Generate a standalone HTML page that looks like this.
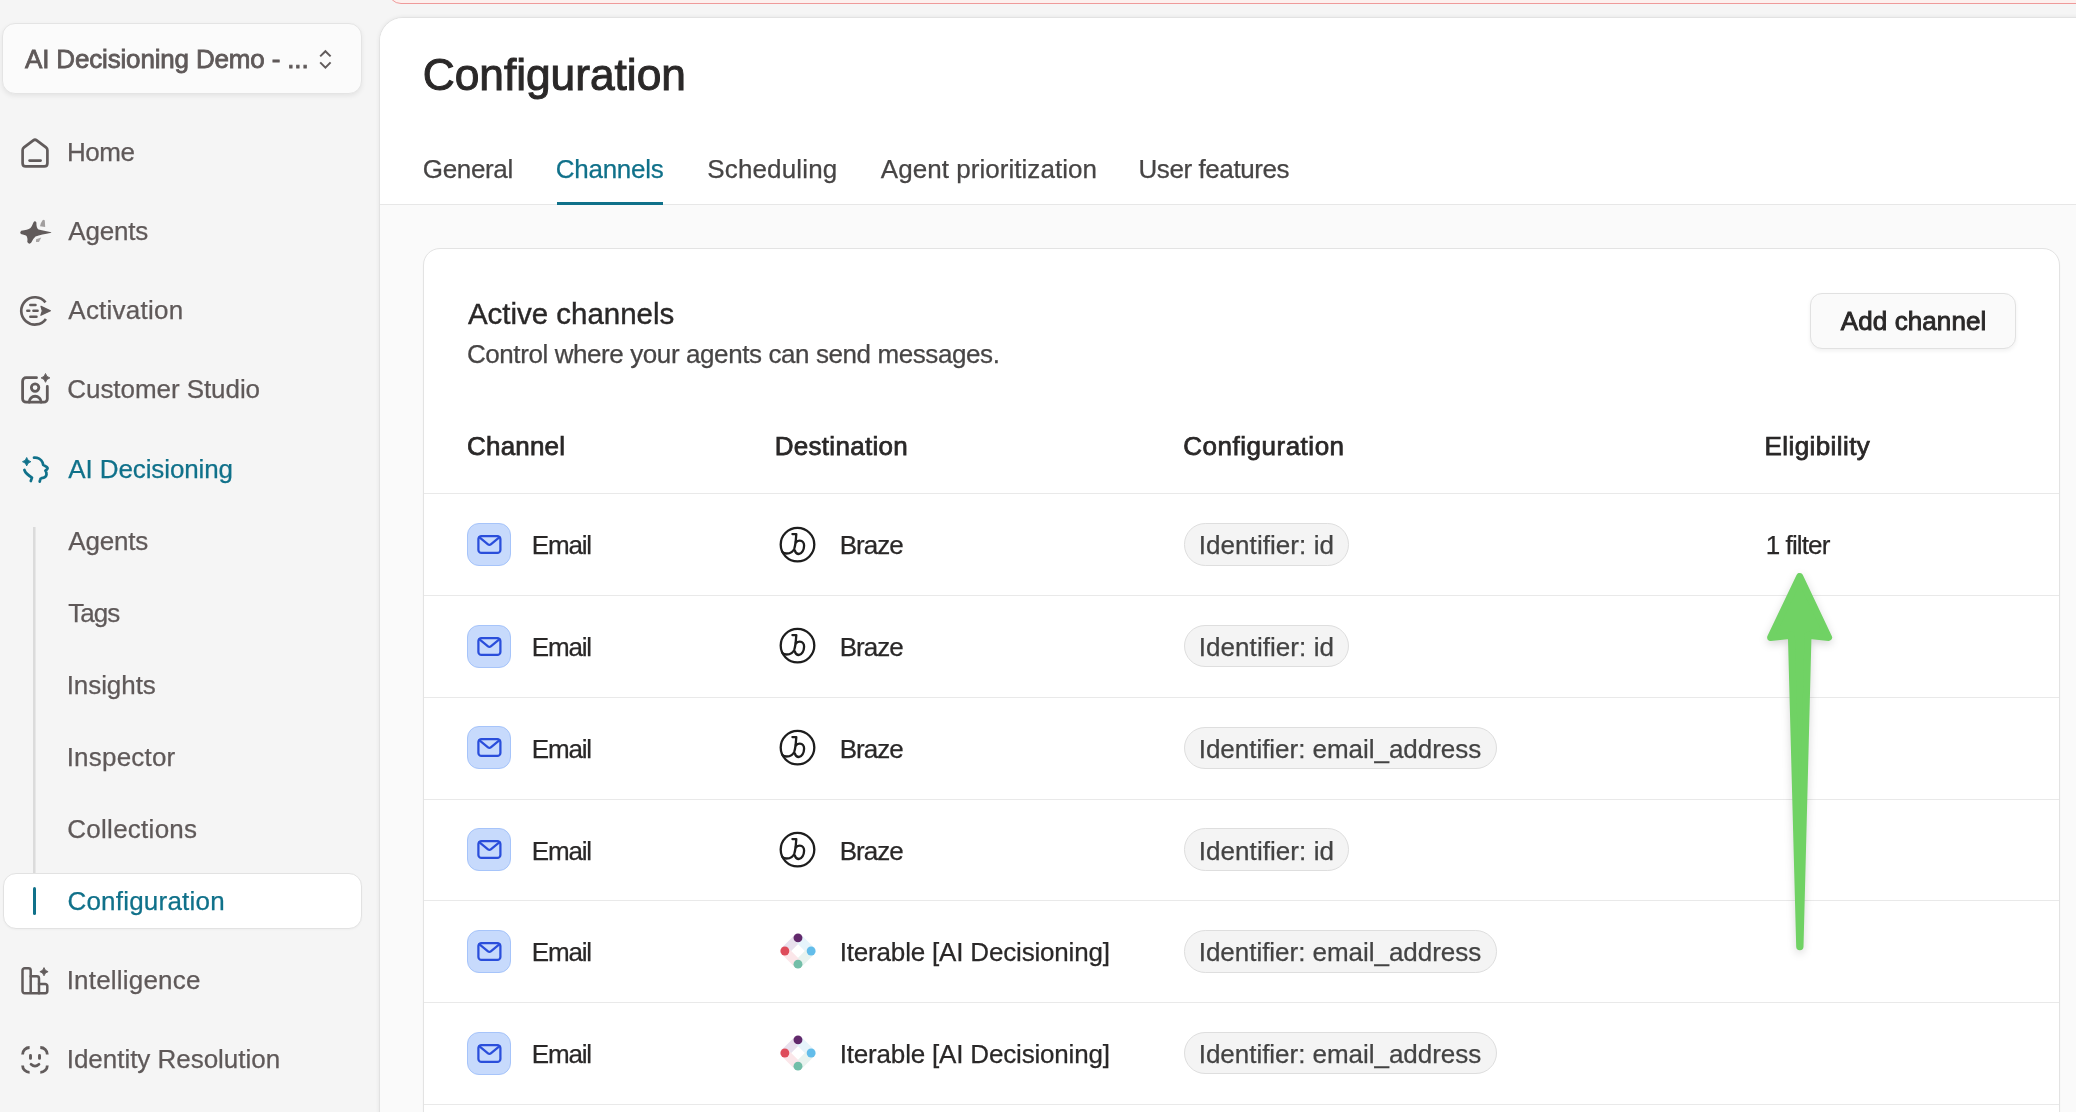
<!DOCTYPE html>
<html lang="en">
<head>
<meta charset="utf-8">
<title>Configuration</title>
<style>
*{box-sizing:border-box;margin:0;padding:0}
html,body{width:2076px;height:1112px;overflow:hidden;background:#f5f5f5}
body{position:relative;font-family:"Liberation Sans",sans-serif;color:#262424}
#root{position:absolute;left:0;top:0;width:2076px;height:1112px;will-change:transform}
.abs{position:absolute}
.t{position:absolute;white-space:nowrap;line-height:1}
#banner{left:388px;top:-41px;width:1760px;height:45px;border:1.300px solid #ef9a9a;border-radius:13px;background:#fdf0ee}
#ws{left:2px;top:23px;width:360px;height:71px;border:1px solid #e4e4e4;border-radius:13px;background:#fbfbfb;box-shadow:0 2px 5px rgba(0,0,0,.07)}
#subline{left:33px;top:527px;width:2px;height:347px;background:#dbdbdb;box-shadow:1px 0 0 #e7e7e7}
#cfgbox{left:3px;top:873px;width:359px;height:56px;border:1px solid #e2e2e2;border-radius:13px;background:#fff;box-shadow:0 1px 2px rgba(0,0,0,.03)}
#cfgbar{left:33px;top:887.200px;width:2.900px;height:28.300px;background:#10718a;border-radius:1.500px}
#main{left:379px;top:17px;width:1720px;height:1120px;background:#fafafa;border:1px solid #e2e2e2;border-radius:24px 0 0 0;overflow:hidden;box-shadow:0 0 4px rgba(0,0,0,.07)}
#hdr{left:0;top:0;width:1720px;height:187px;background:#fff;border-bottom:1px solid #e7e7e7}
#card{left:423px;top:248px;width:1637px;height:900px;background:#fff;border:1px solid #e3e3e3;border-radius:17px;box-shadow:0 1px 2px rgba(0,0,0,.03)}
#tabline{left:557px;top:201.750px;width:106px;height:3px;background:#10718a}
.rowline{left:424px;width:1635px;height:1px;background:#e9e9e9}
.mail{width:44px;height:43.200px;left:467px;border:1.200px solid #a6c4fa;border-radius:12px;background:#c7dafc}
.pill{height:42.500px;left:1184px;border:1px solid #dedede;border-radius:21.250px;background:#f4f4f4}
#addbtn{left:1810.300px;top:293px;width:205.500px;height:56.200px;border:1px solid #e1e1e1;border-radius:12px;background:#fafafa;box-shadow:0 2px 4px rgba(0,0,0,.06)}
</style>
</head>
<body>
<div id="root">
<div id="banner" class="abs"></div>
<div id="ws" class="abs"></div>
<div class="t" style="left:25.0px;top:46px;font-size:26px;letter-spacing:-0.164px;color:#5f5959;-webkit-text-stroke:0.8px #5f5959">AI Decisioning Demo - ...</div>
<svg class="abs" style="left:314px;top:44px" width="24" height="30" viewBox="314 44 24 30"><path fill="none" stroke="#615b5b" stroke-width="2.0" stroke-linecap="butt" stroke-linejoin="miter" d="M320.200 56.400 325.400 51.200l5.200 5.200M320.200 62.400l5.200 5.200 5.200-5.200"/></svg>
<svg class="abs" style="left:17px;top:133px" width="36" height="38" viewBox="17 133 36 38"><g transform="translate(17 135)" fill="none" stroke="#615b5b" stroke-width="2.7" stroke-linecap="round" stroke-linejoin="round"><path d="M5.600 28.200V15.300Q5.600 13.500 7 12.400L16.300 5.400Q18 4.100 19.700 5.400L29 12.400Q30.400 13.500 30.400 15.300V28.200Q30.400 31.400 27.200 31.400H8.800Q5.600 31.400 5.600 28.200Z"/><path d="M12.600 25.600H23.600"/></g></svg>
<svg class="abs" style="left:14px;top:212px" width="44" height="40" viewBox="14 212 44 40"><path fill="#615b5b" d="M33.400 222.600Q34.800 220.200 36.400 222.400Q36.200 227.600 38.500 229.600Q43.500 230.900 51.200 232.300L51.200 232.700Q41.500 234.600 35.500 236.400Q33 238.500 31.300 242.600Q29.300 245 27.300 241.900Q28 237.500 26 235.600Q24 234.500 20.800 233.900Q19.400 232.200 21.200 230.700Q27.500 230 30.500 228Q32 226.500 33.400 222.600Z"/><path fill="#a19e9e" d="M42.600 220.300Q43.800 219.300 44.800 220.400L45.200 227.100L40 226.300Q40.600 222.800 42.600 220.300Z"/><path fill="#a9a6a6" d="M41.300 237.600L38.900 241.900L36 242L36.100 239.200Z"/></svg>
<svg class="abs" style="left:14px;top:290px" width="44" height="40" viewBox="14 290 44 40"><path fill="none" stroke="#615b5b" stroke-width="2.7" stroke-linecap="butt" stroke-linejoin="round" d="M45.510 302.310A13.650 13.650 0 1 0 45.940 318.920"/><path fill="#615b5b" stroke="#615b5b" stroke-width="1.200" stroke-linejoin="round" d="M41 306.300 50.400 310.700 40.900 315.300 42.300 310.900Z"/><path fill="none" stroke="#615b5b" stroke-width="2.5" stroke-linecap="round" stroke-linejoin="round" d="M30.300 304.900H35.500M27.300 310.800H29.300M33.400 310.800H37.600M30.300 316.800H36.500"/></svg>
<svg class="abs" style="left:14px;top:368px" width="44" height="40" viewBox="14 368 44 40"><path fill="none" stroke="#615b5b" stroke-width="2.8" stroke-linecap="round" stroke-linejoin="round" d="M36.500 377.700H26.100A3.500 3.500 0 0 0 22.600 381.200V398.700A3.500 3.500 0 0 0 26.100 402.200H43.800A3.500 3.500 0 0 0 47.300 398.700V386.500"/><circle fill="none" stroke="#615b5b" stroke-width="2.8" stroke-linecap="round" stroke-linejoin="round" cx="35.100" cy="387.600" r="3.750"/><path fill="none" stroke="#615b5b" stroke-width="2.8" stroke-linecap="round" stroke-linejoin="round" d="M29.200 402.200A5.950 5.950 0 0 1 41.100 402.200"/><path fill="#615b5b" stroke="#615b5b" stroke-width="0.900" stroke-linejoin="round" d="M45.5 373.5Q46.284 377.116 49.9 377.9Q46.284 378.68399999999997 45.5 382.29999999999995Q44.716 378.68399999999997 41.1 377.9Q44.716 377.116 45.5 373.5Z"/></svg>
<svg class="abs" style="left:14px;top:450px" width="44" height="40" viewBox="14 450 44 40"><path fill="none" stroke="#10718a" stroke-width="2.7" stroke-linecap="round" stroke-linejoin="round" d="M34 457.600C37.500 457.300 41.200 459.200 42.600 462.600L43.200 464.800L47 467.200Q48.200 468.400 47 469.400L45.400 470.600Q46.600 472 46.500 474.500Q46.200 477.600 41.500 478.200Q40.400 478.500 40.200 479.500L39.700 481.600"/><path fill="none" stroke="#10718a" stroke-width="2.7" stroke-linecap="round" stroke-linejoin="round" d="M24.400 470C25.500 473.500 28.500 475.500 32 477.600L30.800 481"/><path fill="#10718a" stroke="#10718a" stroke-width="0.900" stroke-linejoin="round" d="M26.7 457.5Q27.451999999999998 460.948 30.9 461.7Q27.451999999999998 462.452 26.7 465.9Q25.948 462.452 22.5 461.7Q25.948 460.948 26.7 457.5Z"/></svg>
<svg class="abs" style="left:14px;top:960px" width="44" height="40" viewBox="14 960 44 40"><path fill="none" stroke="#615b5b" stroke-width="2.5" stroke-linecap="round" stroke-linejoin="round" d="M30.7 993.2V970.5A2.2 2.2 0 0 0 28.5 968.3H24.7A2.2 2.2 0 0 0 22.5 970.5V991.0A2.2 2.2 0 0 0 24.7 993.2H45.099999999999994A2.2 2.2 0 0 0 47.3 991.0V986.1A2.2 2.2 0 0 0 45.099999999999994 983.9H39.0"/><path fill="none" stroke="#615b5b" stroke-width="2.5" stroke-linecap="round" stroke-linejoin="round" d="M30.7 976.2H36.8A2.2 2.2 0 0 1 39.0 978.4000000000001V993.2"/><path fill="#615b5b" stroke="#615b5b" stroke-width="0.900" stroke-linejoin="round" d="M44.0 967.6Q44.736 970.964 48.1 971.7Q44.736 972.436 44.0 975.8000000000001Q43.264 972.436 39.9 971.7Q43.264 970.964 44.0 967.6Z"/></svg>
<svg class="abs" style="left:14px;top:1040px" width="44" height="40" viewBox="14 1040 44 40"><path fill="none" stroke="#615b5b" stroke-width="2.8" stroke-linecap="butt" stroke-linejoin="round" d="M22.600 1054.500A7 7 0 0 1 29.600 1047.500M40.300 1047.500A7 7 0 0 1 47.300 1054.500M47.300 1065.400A7 7 0 0 1 40.300 1072.400M29.600 1072.400A7 7 0 0 1 22.600 1065.400"/><path fill="none" stroke="#615b5b" stroke-width="2.9" stroke-linecap="round" stroke-linejoin="round" d="M30.500 1055.400V1058.400M39.500 1055.400V1058.400"/><path fill="none" stroke="#615b5b" stroke-width="2.7" stroke-linecap="round" stroke-linejoin="round" d="M31 1064.300Q35 1067.900 39 1064.300"/></svg>
<div class="t" style="left:67.0px;top:139px;font-size:26px;letter-spacing:-0.432px;color:#5f5959;-webkit-text-stroke:0.25px #5f5959">Home</div>
<div class="t" style="left:68.3px;top:218px;font-size:26px;letter-spacing:-0.209px;color:#5f5959;-webkit-text-stroke:0.25px #5f5959">Agents</div>
<div class="t" style="left:68.3px;top:297px;font-size:26px;letter-spacing:0.238px;color:#5f5959;-webkit-text-stroke:0.25px #5f5959">Activation</div>
<div class="t" style="left:67.3px;top:376px;font-size:26px;letter-spacing:-0.063px;color:#5f5959;-webkit-text-stroke:0.25px #5f5959">Customer Studio</div>
<div class="t" style="left:68.3px;top:456px;font-size:26px;letter-spacing:-0.11px;color:#10718a;-webkit-text-stroke:0.25px #10718a">AI Decisioning</div>
<div id="subline" class="abs"></div>
<div class="t" style="left:68.3px;top:528px;font-size:26px;letter-spacing:-0.209px;color:#5f5959;-webkit-text-stroke:0.25px #5f5959">Agents</div>
<div class="t" style="left:68.3px;top:600px;font-size:26px;letter-spacing:-1.007px;color:#5f5959;-webkit-text-stroke:0.25px #5f5959">Tags</div>
<div class="t" style="left:66.7px;top:672px;font-size:26px;letter-spacing:-0.072px;color:#5f5959;-webkit-text-stroke:0.25px #5f5959">Insights</div>
<div class="t" style="left:66.7px;top:744px;font-size:26px;letter-spacing:0.202px;color:#5f5959;-webkit-text-stroke:0.25px #5f5959">Inspector</div>
<div class="t" style="left:67.3px;top:816px;font-size:26px;letter-spacing:0.263px;color:#5f5959;-webkit-text-stroke:0.25px #5f5959">Collections</div>
<div id="cfgbox" class="abs"></div><div id="cfgbar" class="abs"></div>
<div class="t" style="left:67.4px;top:888px;font-size:26px;letter-spacing:0.217px;color:#10718a;-webkit-text-stroke:0.25px #10718a">Configuration</div>
<div class="t" style="left:66.7px;top:967px;font-size:26px;letter-spacing:0.193px;color:#5f5959;-webkit-text-stroke:0.25px #5f5959">Intelligence</div>
<div class="t" style="left:66.7px;top:1046px;font-size:26px;letter-spacing:-0.025px;color:#5f5959;-webkit-text-stroke:0.25px #5f5959">Identity Resolution</div>
<div id="main" class="abs"><div id="hdr" class="abs"></div></div>
<div class="t" style="left:422.7px;top:53px;font-size:44.3px;letter-spacing:-0.021px;color:#2a2828;-webkit-text-stroke:1.0px #2a2828">Configuration</div>
<div class="t" style="left:422.75px;top:156px;font-size:26px;letter-spacing:-0.329px;color:#474545;-webkit-text-stroke:0.25px #474545">General</div>
<div class="t" style="left:555.75px;top:156px;font-size:26px;letter-spacing:-0.265px;color:#10718a;-webkit-text-stroke:0.25px #10718a">Channels</div>
<div class="t" style="left:707.25px;top:156px;font-size:26px;letter-spacing:0.145px;color:#474545;-webkit-text-stroke:0.25px #474545">Scheduling</div>
<div class="t" style="left:880.75px;top:156px;font-size:26px;letter-spacing:0.046px;color:#474545;-webkit-text-stroke:0.25px #474545">Agent prioritization</div>
<div class="t" style="left:1138.5px;top:156px;font-size:26px;letter-spacing:-0.422px;color:#474545;-webkit-text-stroke:0.25px #474545">User features</div>
<div id="tabline" class="abs"></div>
<div id="card" class="abs"></div>
<div class="t" style="left:467.9px;top:299px;font-size:29.5px;letter-spacing:-0.019px;color:#2a2828;-webkit-text-stroke:0.4px #2a2828">Active channels</div>
<div class="t" style="left:466.9px;top:341px;font-size:26px;letter-spacing:-0.41px;color:#474545;-webkit-text-stroke:0.25px #474545">Control where your agents can send messages.</div>
<div id="addbtn" class="abs"></div>
<div class="t" style="left:1840.8px;top:308px;font-size:26px;letter-spacing:0.091px;color:#2a2828;-webkit-text-stroke:0.9px #2a2828">Add channel</div>
<div class="t" style="left:467.0px;top:433px;font-size:26px;letter-spacing:0.196px;color:#2a2828;-webkit-text-stroke:0.75px #2a2828">Channel</div>
<div class="t" style="left:774.75px;top:433px;font-size:26px;letter-spacing:0.288px;color:#2a2828;-webkit-text-stroke:0.75px #2a2828">Destination</div>
<div class="t" style="left:1183.3px;top:433px;font-size:26px;letter-spacing:0.509px;color:#2a2828;-webkit-text-stroke:0.75px #2a2828">Configuration</div>
<div class="t" style="left:1764.6px;top:433px;font-size:26px;letter-spacing:0.406px;color:#2a2828;-webkit-text-stroke:0.75px #2a2828">Eligibility</div>
<div class="abs rowline" style="top:493.40px"></div>
<div class="abs mail" style="top:522.80px"></div>
<svg class="abs" style="left:467px;top:522.80px" width="44" height="43.200" viewBox="0 0 44 43.200" fill="none" stroke="#2a4edb" stroke-width="2.250" stroke-linecap="round" stroke-linejoin="round"><rect x="11.400" y="13.100" width="22" height="16.800" rx="3"/><path d="M12.200 14.200 21 21.300Q22.400 22.400 23.800 21.300L32.600 14.200"/></svg>
<div class="t" style="left:531.75px;top:532px;font-size:26px;letter-spacing:-1.184px;color:#2a2828;-webkit-text-stroke:0.25px #2a2828">Email</div>
<svg class="abs" style="left:777px;top:524.65px" width="40" height="40" viewBox="0 0 40 40" fill="none" stroke="#1d1d1d" stroke-width="2.300" stroke-linecap="round" stroke-linejoin="round"><circle cx="20.500" cy="19.600" r="16.800"/><path d="M15.400 9.100H19.300L18.650 16.750C18.300 19.500 17.900 21.500 17.400 23.250C16.300 26.800 13.500 28.500 9.400 28.500C7.600 28.500 6.200 27.800 5.200 26.800"/><path d="M18.900 17.400C20 16.200 21.300 15.650 22.800 15.650C25.600 15.650 27.200 17.800 27.100 20.800C27 25 24.800 29 21.800 29C19.800 29 18.400 27.600 17.900 25.400"/></svg>
<div class="t" style="left:839.75px;top:532px;font-size:26px;letter-spacing:-0.99px;color:#2a2828;-webkit-text-stroke:0.25px #2a2828">Braze</div>
<div class="abs pill" style="top:523.00px;width:165px"></div>
<div class="t" style="left:1198.75px;top:532px;font-size:26px;letter-spacing:0.062px;color:#434343;-webkit-text-stroke:0.25px #434343">Identifier: id</div>
<div class="t" style="left:1765.7px;top:532px;font-size:26px;letter-spacing:-0.878px;color:#2a2828;-webkit-text-stroke:0.25px #2a2828">1 filter</div>
<div class="abs rowline" style="top:595.15px"></div>
<div class="abs mail" style="top:624.55px"></div>
<svg class="abs" style="left:467px;top:624.55px" width="44" height="43.200" viewBox="0 0 44 43.200" fill="none" stroke="#2a4edb" stroke-width="2.250" stroke-linecap="round" stroke-linejoin="round"><rect x="11.400" y="13.100" width="22" height="16.800" rx="3"/><path d="M12.200 14.200 21 21.300Q22.400 22.400 23.800 21.300L32.600 14.200"/></svg>
<div class="t" style="left:531.75px;top:634px;font-size:26px;letter-spacing:-1.184px;color:#2a2828;-webkit-text-stroke:0.25px #2a2828">Email</div>
<svg class="abs" style="left:777px;top:626.40px" width="40" height="40" viewBox="0 0 40 40" fill="none" stroke="#1d1d1d" stroke-width="2.300" stroke-linecap="round" stroke-linejoin="round"><circle cx="20.500" cy="19.600" r="16.800"/><path d="M15.400 9.100H19.300L18.650 16.750C18.300 19.500 17.900 21.500 17.400 23.250C16.300 26.800 13.500 28.500 9.400 28.500C7.600 28.500 6.200 27.800 5.200 26.800"/><path d="M18.900 17.400C20 16.200 21.300 15.650 22.800 15.650C25.600 15.650 27.200 17.800 27.100 20.800C27 25 24.800 29 21.800 29C19.800 29 18.400 27.600 17.900 25.400"/></svg>
<div class="t" style="left:839.75px;top:634px;font-size:26px;letter-spacing:-0.99px;color:#2a2828;-webkit-text-stroke:0.25px #2a2828">Braze</div>
<div class="abs pill" style="top:624.75px;width:165px"></div>
<div class="t" style="left:1198.75px;top:634px;font-size:26px;letter-spacing:0.062px;color:#434343;-webkit-text-stroke:0.25px #434343">Identifier: id</div>
<div class="abs rowline" style="top:696.90px"></div>
<div class="abs mail" style="top:726.30px"></div>
<svg class="abs" style="left:467px;top:726.30px" width="44" height="43.200" viewBox="0 0 44 43.200" fill="none" stroke="#2a4edb" stroke-width="2.250" stroke-linecap="round" stroke-linejoin="round"><rect x="11.400" y="13.100" width="22" height="16.800" rx="3"/><path d="M12.200 14.200 21 21.300Q22.400 22.400 23.800 21.300L32.600 14.200"/></svg>
<div class="t" style="left:531.75px;top:736px;font-size:26px;letter-spacing:-1.184px;color:#2a2828;-webkit-text-stroke:0.25px #2a2828">Email</div>
<svg class="abs" style="left:777px;top:728.15px" width="40" height="40" viewBox="0 0 40 40" fill="none" stroke="#1d1d1d" stroke-width="2.300" stroke-linecap="round" stroke-linejoin="round"><circle cx="20.500" cy="19.600" r="16.800"/><path d="M15.400 9.100H19.300L18.650 16.750C18.300 19.500 17.900 21.500 17.400 23.250C16.300 26.800 13.500 28.500 9.400 28.500C7.600 28.500 6.200 27.800 5.200 26.800"/><path d="M18.900 17.400C20 16.200 21.300 15.650 22.800 15.650C25.600 15.650 27.200 17.800 27.100 20.800C27 25 24.800 29 21.800 29C19.800 29 18.400 27.600 17.900 25.400"/></svg>
<div class="t" style="left:839.75px;top:736px;font-size:26px;letter-spacing:-0.99px;color:#2a2828;-webkit-text-stroke:0.25px #2a2828">Braze</div>
<div class="abs pill" style="top:726.50px;width:313px"></div>
<div class="t" style="left:1198.75px;top:736px;font-size:26px;letter-spacing:-0.032px;color:#434343;-webkit-text-stroke:0.25px #434343">Identifier: email_address</div>
<div class="abs rowline" style="top:798.65px"></div>
<div class="abs mail" style="top:828.05px"></div>
<svg class="abs" style="left:467px;top:828.05px" width="44" height="43.200" viewBox="0 0 44 43.200" fill="none" stroke="#2a4edb" stroke-width="2.250" stroke-linecap="round" stroke-linejoin="round"><rect x="11.400" y="13.100" width="22" height="16.800" rx="3"/><path d="M12.200 14.200 21 21.300Q22.400 22.400 23.800 21.300L32.600 14.200"/></svg>
<div class="t" style="left:531.75px;top:838px;font-size:26px;letter-spacing:-1.184px;color:#2a2828;-webkit-text-stroke:0.25px #2a2828">Email</div>
<svg class="abs" style="left:777px;top:829.90px" width="40" height="40" viewBox="0 0 40 40" fill="none" stroke="#1d1d1d" stroke-width="2.300" stroke-linecap="round" stroke-linejoin="round"><circle cx="20.500" cy="19.600" r="16.800"/><path d="M15.400 9.100H19.300L18.650 16.750C18.300 19.500 17.900 21.500 17.400 23.250C16.300 26.800 13.500 28.500 9.400 28.500C7.600 28.500 6.200 27.800 5.200 26.800"/><path d="M18.900 17.400C20 16.200 21.300 15.650 22.800 15.650C25.600 15.650 27.200 17.800 27.100 20.800C27 25 24.800 29 21.800 29C19.800 29 18.400 27.600 17.900 25.400"/></svg>
<div class="t" style="left:839.75px;top:838px;font-size:26px;letter-spacing:-0.99px;color:#2a2828;-webkit-text-stroke:0.25px #2a2828">Braze</div>
<div class="abs pill" style="top:828.25px;width:165px"></div>
<div class="t" style="left:1198.75px;top:838px;font-size:26px;letter-spacing:0.062px;color:#434343;-webkit-text-stroke:0.25px #434343">Identifier: id</div>
<div class="abs rowline" style="top:900.40px"></div>
<div class="abs mail" style="top:929.80px"></div>
<svg class="abs" style="left:467px;top:929.80px" width="44" height="43.200" viewBox="0 0 44 43.200" fill="none" stroke="#2a4edb" stroke-width="2.250" stroke-linecap="round" stroke-linejoin="round"><rect x="11.400" y="13.100" width="22" height="16.800" rx="3"/><path d="M12.200 14.200 21 21.300Q22.400 22.400 23.800 21.300L32.600 14.200"/></svg>
<div class="t" style="left:531.75px;top:939px;font-size:26px;letter-spacing:-1.184px;color:#2a2828;-webkit-text-stroke:0.25px #2a2828">Email</div>
<svg class="abs" style="left:777.500px;top:931.45px" width="40" height="40" viewBox="0 0 40 40"><g stroke-width="8.900" fill="none"><path d="M6.850 20 20 6.850" stroke="#e8e0ed"/><path d="M20 6.850 33.150 20" stroke="#e6f4fb"/><path d="M33.150 20 20 33.150" stroke="#e8f3ef"/><path d="M20 33.150 6.850 20" stroke="#fbe6e9"/></g><circle cx="20" cy="6.850" r="4.450" fill="#62296c"/><circle cx="6.850" cy="20" r="4.450" fill="#de4b5a"/><circle cx="33.150" cy="20" r="4.450" fill="#63bdea"/><circle cx="20" cy="33.150" r="4.450" fill="#73bea8"/></svg>
<div class="t" style="left:839.75px;top:939px;font-size:26px;letter-spacing:-0.182px;color:#2a2828;-webkit-text-stroke:0.25px #2a2828">Iterable [AI Decisioning]</div>
<div class="abs pill" style="top:930.00px;width:313px"></div>
<div class="t" style="left:1198.75px;top:939px;font-size:26px;letter-spacing:-0.032px;color:#434343;-webkit-text-stroke:0.25px #434343">Identifier: email_address</div>
<div class="abs rowline" style="top:1002.15px"></div>
<div class="abs mail" style="top:1031.55px"></div>
<svg class="abs" style="left:467px;top:1031.55px" width="44" height="43.200" viewBox="0 0 44 43.200" fill="none" stroke="#2a4edb" stroke-width="2.250" stroke-linecap="round" stroke-linejoin="round"><rect x="11.400" y="13.100" width="22" height="16.800" rx="3"/><path d="M12.200 14.200 21 21.300Q22.400 22.400 23.800 21.300L32.600 14.200"/></svg>
<div class="t" style="left:531.75px;top:1041px;font-size:26px;letter-spacing:-1.184px;color:#2a2828;-webkit-text-stroke:0.25px #2a2828">Email</div>
<svg class="abs" style="left:777.500px;top:1033.20px" width="40" height="40" viewBox="0 0 40 40"><g stroke-width="8.900" fill="none"><path d="M6.850 20 20 6.850" stroke="#e8e0ed"/><path d="M20 6.850 33.150 20" stroke="#e6f4fb"/><path d="M33.150 20 20 33.150" stroke="#e8f3ef"/><path d="M20 33.150 6.850 20" stroke="#fbe6e9"/></g><circle cx="20" cy="6.850" r="4.450" fill="#62296c"/><circle cx="6.850" cy="20" r="4.450" fill="#de4b5a"/><circle cx="33.150" cy="20" r="4.450" fill="#63bdea"/><circle cx="20" cy="33.150" r="4.450" fill="#73bea8"/></svg>
<div class="t" style="left:839.75px;top:1041px;font-size:26px;letter-spacing:-0.182px;color:#2a2828;-webkit-text-stroke:0.25px #2a2828">Iterable [AI Decisioning]</div>
<div class="abs pill" style="top:1031.75px;width:313px"></div>
<div class="t" style="left:1198.75px;top:1041px;font-size:26px;letter-spacing:-0.032px;color:#434343;-webkit-text-stroke:0.25px #434343">Identifier: email_address</div>
<div class="abs rowline" style="top:1103.90px"></div>
<svg class="abs" style="left:1750px;top:560px;filter:drop-shadow(0 3px 4px rgba(0,0,0,.16))" width="100" height="400" viewBox="1750 560 100 400"><path d="M1799.700 576.500 1828.600 637.400 1808 635.200 1800 946.700H1799.700L1791.400 635.200 1770.600 637.400Z" fill="#70d264" stroke="#70d264" stroke-width="7" stroke-linejoin="round"/></svg>
</div>
</body>
</html>
